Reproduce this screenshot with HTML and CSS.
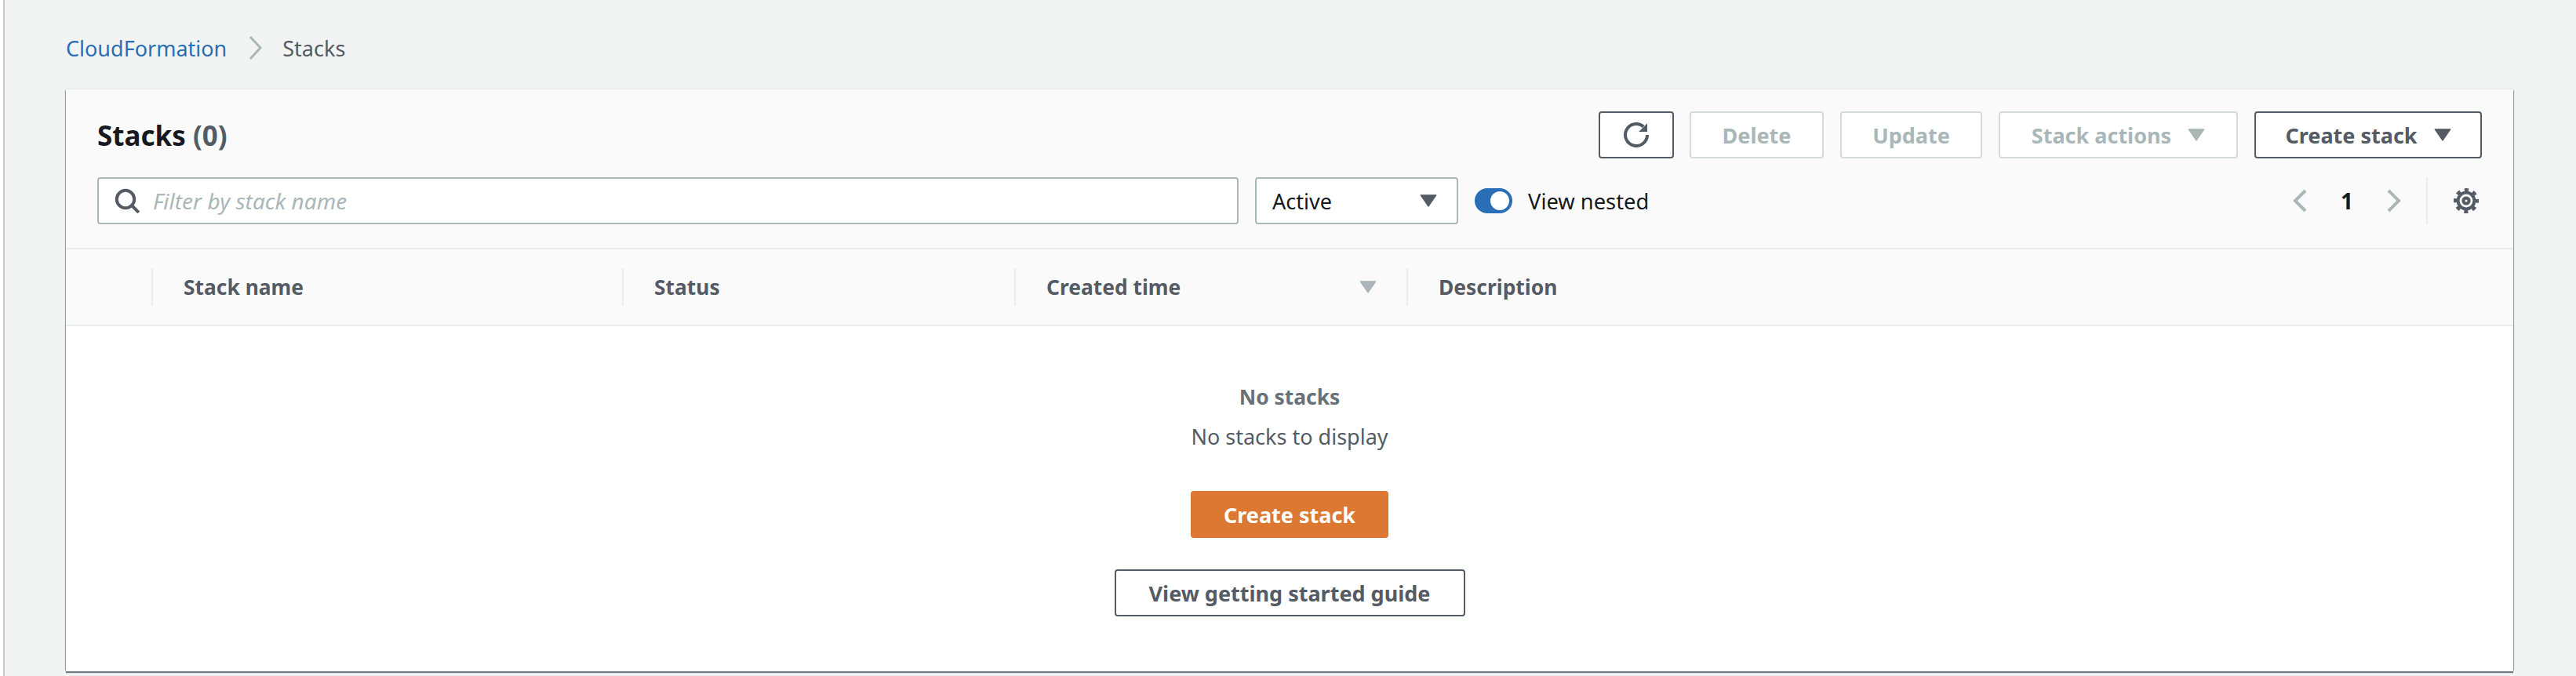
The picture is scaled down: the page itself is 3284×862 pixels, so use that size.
FILE: index.html
```html
<!DOCTYPE html>
<html>
<head>
<title>CloudFormation - Stacks</title>
<meta charset="utf-8" />
<link rel="stylesheet" href="styles.css">
</head>

<body>

<div class="page">

	<nav class="crumbs">
		<a href="#" class="crumb-link">CloudFormation</a>
		<svg class="crumb-sep" viewBox="0 0 18 30"><path d="M2 1l13 14L2 29" /></svg>
		<span class="crumb-here">Stacks</span>
	</nav>

	<section class="card">

		<header class="card-head">

			<div class="head-row">
				<h1 class="title">Stacks <span class="count">(0)</span></h1>
				<div class="actions">
					<button class="btn btn-refresh" type="button">
						<svg class="icon" viewBox="0 0 16 16"><path class="line" d="M15 8a7 7 0 1 1-2.4-5.3" /><path class="solid" d="M15 .6V6H9.6z" /></svg>
					</button>
					<button class="btn btn-delete" type="button" disabled>Delete</button>
					<button class="btn btn-update" type="button" disabled>Update</button>
					<button class="btn btn-actions" type="button" disabled>Stack actions <svg class="caret" viewBox="0 0 20 16"><path d="M1 1.5h18l-9 13z" /></svg></button>
					<button class="btn btn-create" type="button">Create stack <svg class="caret" viewBox="0 0 20 16"><path d="M1 1.5h18l-9 13z" /></svg></button>
				</div>
			</div>

			<div class="filter-row">
				<label class="search">
					<svg class="icon" viewBox="0 0 16 16"><circle class="line" cx="7" cy="7" r="5.6" /><path class="line" d="M11 11l4.4 4.4" /></svg>
					<input type="text" placeholder="Filter by stack name" />
				</label>
				<div class="select">Active <svg class="caret" viewBox="0 0 20 16"><path d="M1 1.5h18l-9 13z" /></svg></div>
				<div class="toggle"><span class="knob"></span></div>
				<span class="toggle-label">View nested</span>
				<div class="pager">
					<svg class="chev" viewBox="0 0 18 30"><path d="M16 2L3 15l13 13" /></svg>
					<span class="page-num">1</span>
					<svg class="chev" viewBox="0 0 18 30"><path d="M2 2l13 13L2 28" /></svg>
				</div>
				<div class="settings">
					<svg class="icon" viewBox="0 0 16 16">
						<circle class="line" cx="8" cy="8" r="5.2" />
						<circle class="line" cx="8" cy="8" r="1.8" />
						<circle class="teeth" cx="8" cy="8" r="7" />
					</svg>
				</div>
			</div>

		</header>

		<div class="table-head">
			<div class="col-check"></div>
			<div class="col">Stack name</div>
			<div class="col">Status</div>
			<div class="col col-sort">Created time <svg class="caret" viewBox="0 0 20 16"><path d="M1 1.5h18l-9 13z" /></svg></div>
			<div class="col">Description</div>
		</div>

		<div class="empty">
			<div class="empty-title">No stacks</div>
			<div class="empty-text">No stacks to display</div>
			<button class="btn btn-primary" type="button">Create stack</button>
			<button class="btn btn-guide" type="button">View getting started guide</button>
		</div>

	</section>

</div>

</body>
</html>
```

FILE: styles.css
```css
body {
	margin: 0;
	background: #fff;
	font: 28px "Noto Sans", Arial, sans-serif;
	color: #16191f;
}

.page {
	box-sizing: border-box;
	width: 3280px;
	height: 862px;
	margin-left: 4px;
	padding: 0 76px 0 78px;
	border-left: 2px solid #c4c8c8;
	background: #f2f3f3;
	overflow: hidden;
}

/* breadcrumb */

.crumbs {
	display: flex;
	align-items: center;
	height: 114px;
	padding: 8px 0 0 0;
	box-sizing: border-box;
	font-size: 27px;
}

.crumb-link {
	color: #2a6eb5;
	text-decoration: none;
}

.crumb-sep {
	width: 18px;
	height: 30px;
	margin: 0 25px 0 28px;
	fill: none;
	stroke: #aab7b8;
	stroke-width: 3;
}

.crumb-here {
	color: #545b64;
}

/* card */

.card {
	width: 3120px;
	height: 742px;
	background: #fff;
	box-shadow: 0 2px 1px rgba(0, 28, 36, 0.55), 2px 0 1px -1px rgba(0, 28, 36, 0.3), -2px 0 1px -1px rgba(0, 28, 36, 0.3), 0 -1px 1px rgba(0, 28, 36, 0.06);
}

.card-head {
	padding: 28px 40px 30px 40px;
	background: #fafafa;
	border-bottom: 2px solid #eaeded;
}

.head-row,
.filter-row {
	display: flex;
	align-items: center;
	height: 60px;
}

.head-row {
	justify-content: space-between;
	margin-bottom: 24px;
}

.title {
	margin: 0;
	font-size: 35px;
	font-weight: 700;
}

.count {
	font-weight: 700;
	color: #545b64;
}

/* buttons */

.actions {
	display: flex;
	gap: 21px;
}

.btn {
	box-sizing: border-box;
	display: flex;
	align-items: center;
	justify-content: center;
	height: 60px;
	padding: 0;
	border: 2px solid #545b64;
	border-radius: 4px;
	background: #fff;
	color: #545b64;
	font: 700 27px "Noto Sans", Arial, sans-serif;
}

.btn:disabled {
	border-color: #d5dbdb;
	color: #aab7b8;
}

.btn-refresh { width: 96px; margin-right: -1px; }
.btn-delete { width: 171px; }
.btn-update { width: 181px; }
.btn-actions { width: 305px; }
.btn-create { width: 290px; }

.icon {
	width: 32px;
	height: 32px;
	flex: none;
	overflow: visible;
}

.line {
	fill: none;
	stroke: #545b64;
	stroke-width: 2;
}

.solid {
	fill: #545b64;
}

.teeth {
	fill: none;
	stroke: #545b64;
	stroke-width: 2;
	stroke-dasharray: 2.6 2.9;
	stroke-dashoffset: 1.3;
}

.caret {
	width: 22px;
	height: 18px;
	margin-left: 21px;
	fill: #545b64;
	stroke: #545b64;
	stroke-width: 1;
	stroke-linejoin: round;
}

.btn:disabled .caret,
.col-sort .caret {
	fill: #aab7b8;
	stroke: #aab7b8;
}

/* filter row */

.search {
	box-sizing: border-box;
	display: flex;
	align-items: center;
	gap: 17px;
	width: 1455px;
	height: 60px;
	padding-left: 20px;
	border: 2px solid #aab7b8;
	border-radius: 4px;
	background: #fff;
}

.search input {
	flex: 1;
	border: 0;
	padding: 0;
	outline: 0;
	font: italic 28px "Noto Sans", Arial, sans-serif;
}

.search input::placeholder {
	color: #aab7b8;
	opacity: 1;
}

.select {
	box-sizing: border-box;
	display: flex;
	align-items: center;
	justify-content: space-between;
	width: 259px;
	height: 60px;
	margin-left: 21px;
	padding: 0 25px 0 20px;
	border: 2px solid #aab7b8;
	border-radius: 4px;
	background: #fff;
	font-size: 27px;
}

.toggle {
	display: flex;
	align-items: center;
	justify-content: flex-end;
	box-sizing: border-box;
	width: 48px;
	height: 32px;
	margin: 0 20px 0 21px;
	padding-right: 4px;
	border-radius: 16px;
	background: #2a6eb5;
}

.knob {
	width: 24px;
	height: 24px;
	border-radius: 50%;
	background: #fff;
}

.toggle-label {
	font-size: 27.3px;
}

.pager {
	display: flex;
	align-items: center;
	margin-left: auto;
}

.chev {
	width: 18px;
	height: 30px;
	fill: none;
	stroke: #aab7b8;
	stroke-width: 4;
}

.page-num {
	width: 102px;
	text-align: center;
	font-weight: 700;
}

.settings {
	display: flex;
	align-items: center;
	height: 60px;
	margin: 0 4px 0 32px;
	padding-left: 33px;
	border-left: 2px solid #eaeded;
}

/* table */

.table-head {
	box-sizing: border-box;
	display: grid;
	grid-template-columns: 109px 600px 500px 500px 1fr;
	align-items: center;
	height: 98px;
	background: #fafafa;
	border-bottom: 2px solid #eaeded;
	color: #545b64;
	font-weight: 700;
	font-size: 26.4px;
}

.col {
	box-sizing: border-box;
	height: 48px;
	line-height: 48px;
	padding-left: 39px;
	border-left: 2px solid #eaeded;
}

.col-sort {
	display: flex;
	align-items: center;
	justify-content: space-between;
	padding-right: 38px;
}

/* empty state */

.empty {
	display: flex;
	flex-direction: column;
	align-items: center;
	padding-top: 70px;
	color: #545b64;
	font-size: 27px;
}

.empty-title {
	line-height: 40px;
	font-weight: 700;
	font-size: 26.4px;
	color: #687078;
}

.empty-text {
	margin-top: 11px;
	line-height: 40px;
}

.btn-primary {
	width: 252px;
	margin-top: 49px;
	border-color: #dd7833;
	background: #dd7833;
	color: #fff;
}

.btn-guide {
	width: 447px;
	margin-top: 40px;
}
```
